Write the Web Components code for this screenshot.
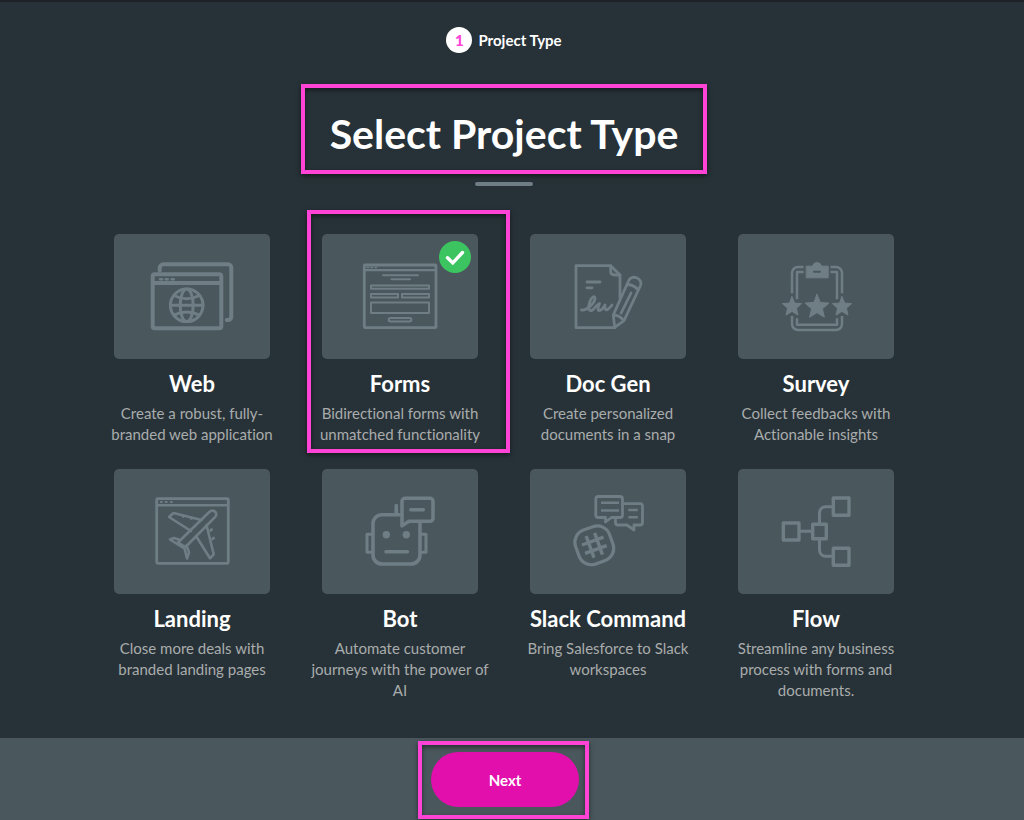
<!DOCTYPE html>
<html lang="en">
<head>
<meta charset="utf-8">
<title>Select Project Type</title>
<meta name="viewport" content="width=device-width, initial-scale=1">
<style>
  :root {
    --page: #273238; --panel: #4a585d; --line: #6e7e84;
    --mark: #ff43d6; --accent: #e30fac; --ok: #3cc461;
  }
  body { margin: 0; background: var(--page); color: #fff; font-family: Lato, "Liberation Sans", sans-serif; font-variant-ligatures: none; }
</style>
</head>
<body>
<project-wizard></project-wizard>
<script>
const star = (cx, cy, r) => {
  const pts = [];
  for (let i = 0; i < 10; i++) {
    const a = -Math.PI / 2 + i * Math.PI / 5, q = i % 2 ? r * 0.45 : r;
    pts.push((cx + q * Math.cos(a)).toFixed(1) + ',' + (cy + q * Math.sin(a)).toFixed(1));
  }
  return `<polygon class="f" stroke-width="1" points="${pts.join(' ')}"/>`;
};
const ICONS = {
  web: `<g stroke-width="4"><path d="M45.7 36.5V34a3.7 3.7 0 0 1 3.7-3.7H114a3.3 3.3 0 0 1 3.3 3.3V82.700a3.300 3.300 0 0 1-3.300 3.300h-1.300"/>
    <rect x="38.700" y="40.300" width="68.600" height="54" rx="2"/><path d="M39 49h68" stroke-linecap="butt"/></g>
    <path d="M46 45.200h2M51.700 45.200h2M57.700 45.200h2" stroke-width="2.600"/>
    <g stroke-width="3"><circle cx="72.700" cy="71.300" r="16.300"/><ellipse cx="72.700" cy="71.300" rx="6.500" ry="16.300"/><path d="M56.500 71.300H89M60 61.500q12.700 6.500 25.400 0M60 81.200q12.700-6.500 25.400 0"/></g>`,
  forms: `<rect x="42.300" y="31" width="71.700" height="62.700" rx="1" stroke-width="2.800"/><path d="M43 36.200h70" stroke-width="2.200"/>
    <path d="M45.200 33.500h1.500M49 33.500h1.500M53 33.500h1.500" stroke-width="1.500"/>
    <g stroke-width="2"><path d="M61 41.300h35M69.500 45.300h18.500"/><rect x="49" y="51.500" width="58" height="3.200"/><rect x="49" y="60" width="27" height="3.600"/><rect x="80" y="60" width="27" height="3.600"/><rect x="49" y="68.500" width="58" height="10.500"/><rect x="66.700" y="84" width="22.700" height="3.400" rx="1.700"/></g>`,
  doc: `<g stroke-width="2.800"><path d="M90 64V41l-9.300-9.300H46v62h39"/><path d="M80.700 32v5.500q0 3.500 4 3.500H90"/><path d="M57 48h13M57 53.800h5"/>
    <path d="M51.500 76c6 .5 13-7 13.500-11.500c0-3.500-3.500-2-5.300 3.500c-1.800 5.500-1 9 1.800 8.500c3-.500 4-6 8-7c-2 5-2 7 0 7c2.500 0 4-3 5.500-5.500c-.500 4 .500 5.500 2.500 4.500q1.700-1 4.500-4.500"/>
    <path d="M83.300 81L98.500 47c2.500-7.500 15-2.500 12 4.500L94 86.700l-9.300 6.600zM83.300 81q6 0 10.700 5.700M97 50.500q6.500 0 11.300 5.500M101 59l-9.800 20"/></g>`,
  survey: `<g stroke-width="2.500" stroke-linecap="butt"><path d="M65.500 33H60a6 6 0 0 0-6 6v20.300M65.500 38H59v27.300M92.500 33H98a6 6 0 0 1 6 6v20.300M92.500 38H99v27.300M54 82v8a6 6 0 0 0 6 6h38a6 6 0 0 0 6-6v-8M59 84.300v6.400h40v-6.400"/></g>
    <path class="f" stroke-width="1" d="M68.500 32.200h6a4.600 4.600 0 0 1 9 0h6.700v11.600H68.500z"/><path d="M76 37.800h6" style="stroke:var(--panel)" stroke-width="2"/>` + star(79, 73, 12.6) + star(54, 72.8, 10.2) + star(104, 72.8, 10.2),
  landing: `<rect x="42.700" y="29.700" width="71.600" height="64.600" rx="1" stroke-width="2.800"/><path d="M43 36.300h71" stroke-width="2.500"/>
    <path d="M46.800 33h1M51.700 33h1M56.800 33h1" stroke-width="2"/>
    <g stroke-width="2.600"><path d="M64 73.500L95 43.200c4-4 10 .800 6 5L71.500 78z"/><path d="M87.500 51l-28-7-4.500 4 22 14M92.500 56l7.200 29.300-3.700 4-14-22.300"/><path d="M66 71l-6-2-4 1.500 9.500 6 5 3 2.500 10 2-6-2.500-7"/><path d="M68.500 46.300l1 1.200M76.500 48.300l1 1.200M96.500 61.500l1.200-1M98.500 70l1.200-1"/></g>`,
  bot: `<g stroke-width="3.600"><path d="M77.500 45.700H60a9 9 0 0 0-9 9V86a9 9 0 0 0 9 9h29a9 9 0 0 0 9-9V54.500"/><path d="M74.300 36.500v8"/><path d="M80 56.700V32.300a3 3 0 0 1 3-3h25a3 3 0 0 1 3 3v17a3 3 0 0 1-3 3H87z"/><path d="M88.800 40.700h12.500M64 82.700h21.500"/></g>
    <path d="M50 65.300h-5v18h5M99 65.300h5v18h-5" stroke-width="3"/><circle class="f" stroke="none" cx="64.300" cy="65.700" r="3.700"/><circle class="f" stroke="none" cx="84.300" cy="65.700" r="3.700"/>`,
  slack: `<g stroke-width="3.200" transform="rotate(-20 64.300 76.300)"><rect x="46.300" y="58.300" width="36" height="36" rx="13"/><path d="M59.800 64.800v23M68.800 64.800v23M52.800 71.800h23M52.800 80.800h23" stroke-linecap="butt" stroke-width="3.400"/></g>
    <g stroke-width="2.800"><path d="M75.500 48.500h-7.200a2.500 2.500 0 0 1-2.500-2.500V30a2.500 2.500 0 0 1 2.500-2.500H90a2.500 2.500 0 0 1 2.500 2.500v16a2.500 2.500 0 0 1-2.500 2.500h-8.500L75.500 53z"/><path d="M95 34.700h15a2.500 2.500 0 0 1 2.500 2.500v16.300a2.500 2.500 0 0 1-2.500 2.500h-6v5L97 56h-9a2.500 2.500 0 0 1-2.500-2.500V51"/></g>
    <path d="M71 33.700h18M71 41.500h18M98.300 41h9.500M98.300 48.300h9.500" stroke-width="2.400" stroke-linecap="butt"/>`,
  flow: `<g stroke-width="3.400"><rect x="45.300" y="54" width="15.700" height="17"/><rect x="74.700" y="55.300" width="13.600" height="14.400"/><rect x="95.300" y="29" width="15.700" height="17.300"/><rect x="95.300" y="79.300" width="15.700" height="17"/></g>
    <path d="M62 62.300h12M81.500 55V43.700a6 6 0 0 1 6-6H95M81.500 70v11.300a6 6 0 0 0 6 6H95" stroke-width="3"/>`
};

class MarkFrame extends HTMLElement {
  connectedCallback() {
    this.attachShadow({ mode: 'open' }).innerHTML = `
      <style>
        :host { display: block; box-sizing: border-box; border: 4px solid var(--mark); pointer-events: none;
          box-shadow: 0 2px 5px rgba(0,0,0,.5), inset 0 2px 5px rgba(0,0,0,.5); }
      </style><slot></slot>`;
  }
}
customElements.define('mark-frame', MarkFrame);

class WizardStep extends HTMLElement {
  connectedCallback() {
    this.attachShadow({ mode: 'open' }).innerHTML = `
      <style>
        :host { display: flex; align-items: center; justify-content: center; gap: 6px; font-size: 15px; line-height: 26px; font-weight: 700; }
        b { width: 26px; height: 26px; border-radius: 50%; background: #fff; color: var(--mark); text-align: center; }
      </style><b>${this.getAttribute('number')}</b><slot></slot>`;
  }
}
customElements.define('wizard-step', WizardStep);

class TypeCard extends HTMLElement {
  connectedCallback() {
    const on = this.hasAttribute('selected');
    this.attachShadow({ mode: 'open' }).innerHTML = `
      <style>
        :host { display: block; }
        button { all: unset; box-sizing: border-box; position: relative; display: flex; flex-direction: column; align-items: center;
          width: 100%; max-width: 184px; margin: 0 auto; text-align: center; cursor: pointer; }
        button:focus-visible { outline: 2px solid var(--line); }
        .tile { position: relative; width: 156px; height: 125px; background: var(--panel); border-radius: 5px; }
        svg { display: block; }
        .art { width: 100%; height: 100%; fill: none; stroke: var(--line); stroke-linecap: round; stroke-linejoin: round; }
        .f { fill: var(--line); }
        .tick { position: absolute; top: 7px; right: 7px; width: 32px; height: 32px; }
        .name { margin-top: 10px; font-size: 22px; line-height: 30px; font-weight: 700; white-space: nowrap; }
        .text { margin-top: 4px; font-size: 15px; line-height: 21px; color: #a9acac; }
        mark-frame { position: absolute; inset: -24px -18px -8px -1px; }
      </style>
      <button type="button" aria-pressed="${on}">
        <span class="tile"><svg class="art" viewBox="0 0 156 125" aria-hidden="true">${ICONS[this.getAttribute('icon')]}</svg>
        ${on ? '<svg class="tick" viewBox="0 0 32 32" aria-hidden="true"><circle cx="16" cy="16" r="16" fill="var(--ok)"/><path d="M8.500 16.700l5.300 5.200L23.500 11.500" fill="none" stroke="#fff" stroke-width="3.400" stroke-linecap="round"/></svg>' : ''}</span>
        <span class="name">${this.getAttribute('name')}</span>
        <span class="text"><slot></slot></span>
        ${on ? '<mark-frame></mark-frame>' : ''}
      </button>`;
  }
}
customElements.define('type-card', TypeCard);

class WizardFooter extends HTMLElement {
  connectedCallback() {
    this.attachShadow({ mode: 'open' }).innerHTML = `
      <style>
        :host { display: flex; justify-content: center; padding: 14px 14px 13px 0; background: var(--panel); }
        div { position: relative; }
        button { display: block; width: 148px; height: 55px; border: 0; border-radius: 28px; padding: 0; background: var(--accent);
          color: #fff; font: 700 15px/20px Lato, "Liberation Sans", sans-serif; cursor: pointer; }
        mark-frame { position: absolute; inset: -11px -10px -12px -13px; }
      </style>
      <div><button type="button"><slot></slot></button><mark-frame></mark-frame></div>`;
  }
}
customElements.define('wizard-footer', WizardFooter);

class ProjectWizard extends HTMLElement {
  connectedCallback() {
    this.attachShadow({ mode: 'open' }).innerHTML = `
      <style>
        :host { display: flex; flex-direction: column; box-sizing: border-box; min-height: 100vh; border-top: 2px solid #1c2227; }
        main { flex: 1; display: flex; flex-direction: column; align-items: center; padding: 25px 16px 36px 0; }
        .head { margin-top: 31px; padding: 20px 25px 10px; }
        h1 { margin: 0; font-size: 41px; line-height: 52px; font-weight: 700; }
        hr { width: 58px; height: 4px; margin: 8px 0 48px; border: 0; border-radius: 2px; background: var(--line); }
        section { width: 100%; max-width: 832px; display: grid; grid-template-columns: repeat(auto-fit, minmax(184px, 1fr)); row-gap: 24px; }
      </style>
      <main>
        <wizard-step number="1">Project Type</wizard-step>
        <mark-frame class="head"><h1>Select Project Type</h1></mark-frame>
        <hr>
        <section>
          <type-card icon="web" name="Web">Create a robust, fully-branded web application</type-card>
          <type-card icon="forms" name="Forms" selected>Bidirectional forms with unmatched functionality</type-card>
          <type-card icon="doc" name="Doc Gen">Create personalized documents in a snap</type-card>
          <type-card icon="survey" name="Survey">Collect feedbacks with Actionable insights</type-card>
          <type-card icon="landing" name="Landing">Close more deals with branded landing pages</type-card>
          <type-card icon="bot" name="Bot">Automate customer journeys with the power of AI</type-card>
          <type-card icon="slack" name="Slack Command">Bring Salesforce to Slack workspaces</type-card>
          <type-card icon="flow" name="Flow">Streamline any business process with forms and documents.</type-card>
        </section>
      </main>
      <wizard-footer>Next</wizard-footer>`;
  }
}
customElements.define('project-wizard', ProjectWizard);
</script>
</body>
</html>
